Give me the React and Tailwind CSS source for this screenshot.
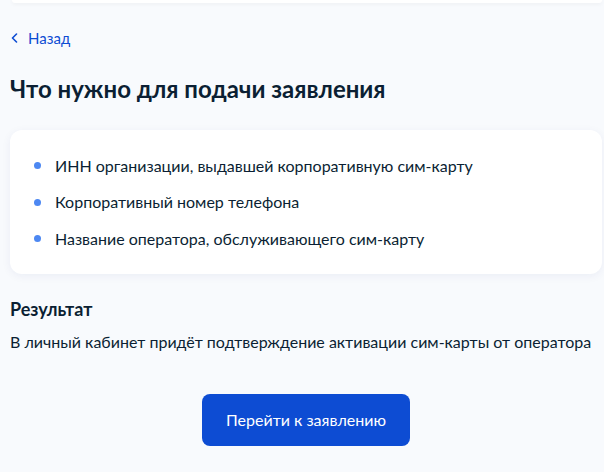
import React from "react";

const items = [
  "ИНН организации, выдавшей корпоративную сим-карту",
  "Корпоративный номер телефона",
  "Название оператора, обслуживающего сим-карту",
];

export default function App() {
  return (
    <div
      className="w-[604px] h-[472px] overflow-hidden bg-[#f8fafd] text-[#0b1f33]"
      style={{ fontFamily: "Lato, 'Noto Sans', sans-serif" }}
    >
      <div className="pl-[10px] pr-[2px]">
        <div className="h-[3px] ml-[2px] bg-white rounded-b-[4px] shadow-[0_1px_4px_rgba(0,0,0,0.06)]" />
        <a className="mt-[25px] flex items-center gap-[10px] text-[15px] leading-[20px] text-[#0d4cd3]">
          <svg width="7" height="10" viewBox="0 0 7 10" className="ml-[1px]">
            <path d="M5.5 1 L1.5 5 L5.5 9" fill="none" stroke="#0d4cd3" strokeWidth="1.6" strokeLinecap="round" strokeLinejoin="round" />
          </svg>
          <span>Назад</span>
        </a>
        <h1 className="mt-[25px] text-[24px] leading-[32px] font-bold">Что нужно для подачи заявления</h1>
        <div className="mt-[25px] h-[144px] bg-white rounded-[12px] shadow-[0_2px_10px_rgba(0,40,120,0.06)] px-[24px] flex flex-col justify-center gap-[16.5px]">
          {items.map((t) => (
            <div key={t} className="flex items-center gap-[14px] text-[16px] leading-[20px]">
              <span className="w-[7px] h-[7px] rounded-full bg-[#4d88f2] shrink-0" />
              <span>{t}</span>
            </div>
          ))}
        </div>
        <h2 className="mt-[23px] text-[18px] leading-[24px] font-bold">Результат</h2>
        <p className="mt-[11px] text-[16px] leading-[20px]">
          В личный кабинет придёт подтверждение активации сим-карты от оператора
        </p>
        <div className="mt-[42px] flex justify-center">
          <button className="w-[208px] h-[52px] rounded-[8px] bg-[#0d4cd3] text-white text-[16px]">
            Перейти к заявлению
          </button>
        </div>
      </div>
    </div>
  );
}
